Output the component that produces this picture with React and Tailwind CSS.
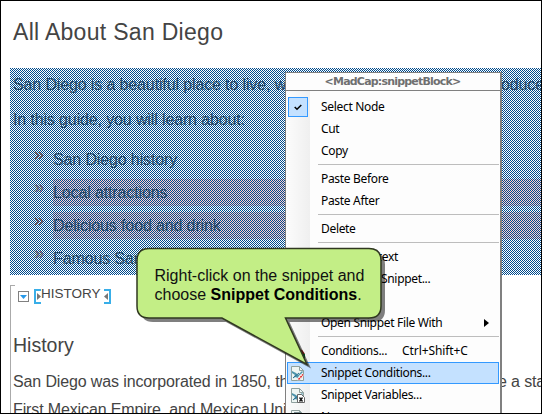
const doc = "font-['Liberation_Sans',Arial,sans-serif]";

function Line({ className, left, right, leftWidth = 'w-[488px]' }) {
  return (
    <div className={`flex whitespace-nowrap text-[16px] leading-[20px] tracking-[-0.13px] text-[#444] ${className}`}>
      <span className={`${leftWidth} shrink-0`}>{left}</span>
      <span>{right}</span>
    </div>
  );
}

function Bullet({ children, tinted }) {
  return (
    <li className="flex h-[33px] items-center pl-[21px] text-[16px] tracking-[-0.13px] text-[#444]">
      <span className="w-[19px] pb-[11px] text-[18px] leading-[14px] text-[#c65b2d]">»</span>
      <span className={`flex h-[27px] grow items-center pt-[1px] ${tinted ? 'bg-[#ffd0d0]' : ''}`}>{children}</span>
    </li>
  );
}

function Item({ children, icon, shortcut, active, checked, arrow }) {
  return (
    <div className={`mx-px flex h-[22px] shrink-0 items-center border ${active ? 'border-[#3399ff] bg-[#c4e1ff]' : 'border-transparent'}`}>
      <div className="flex w-[33px] shrink-0 items-center pl-[2px]">
        {checked ? (
          <span className="-ml-[2px] flex h-[20px] w-[20px] items-center justify-center border border-[#3399ff] bg-[#c4e1ff]">
            <svg width="8" height="7" viewBox="0 0 8 7"><path d="M.7 3 3 5.3 7.3 1" fill="none" stroke="#000" strokeWidth="1.5" /></svg>
          </span>
        ) : icon}
      </div>
      <span className="pb-px">{children}</span>
      {shortcut && <span className="ml-[15px] pb-px tracking-[-0.1px]">{shortcut}</span>}
      {arrow && <svg className="ml-auto mr-[9px]" width="5" height="8"><path d="M0 0 5 4 0 8Z" fill="#000" /></svg>}
    </div>
  );
}

const Separator = () => (
  <div className="h-[6px] shrink-0 pl-[32px] pr-px pt-[2px]"><div className="h-px bg-[#bdbdbd]" /></div>
);

function PageIcon({ kind }) {
  return (
    <svg width="16" height="17" viewBox="0 0 16 17">
      <path d="M1.5 1.5h8l4 4v10h-12z" fill="#eef5f3" stroke="#8fa09e" />
      <path d="M9.5 1.5v4h4" fill="none" stroke="#8fa09e" />
      {kind === 'text' ? <path d="M4 4h7M7.5 4v8" stroke="#7b8e91" strokeWidth="2" /> : (
        <>
          <path d="m2 6 4 2 2 2 4-4 1 1-4 4-1 2-3-1-2 1 2-3-3-2z" fill="#4d94ac" />
          <path d="M3 13 9 8" stroke="#286d90" />
        </>
      )}
      {kind === 'conditions' && (
        <g>
          <path d="m7 14 4-5 3 1-4 5H7z" fill="#fff" stroke="#c9d5dc" strokeWidth=".5" />
          <path d="m8.5 14.5 4.5-5" stroke="#e02929" strokeWidth="1.6" strokeDasharray="2 .7" />
        </g>
      )}
      {kind === 'variables' && (
        <g>
          <path d="M7.5 7.5h4l3 3v5h-7z" fill="#fff" stroke="#666" />
          <path d="m9.5 10.5 3 4m0-4-3 4" stroke="#111" strokeWidth="1.3" />
        </g>
      )}
    </svg>
  );
}

function Menu() {
  return (
    <div className="absolute left-[285px] top-[72px] flex h-[360px] w-[217px] flex-col border border-r-2 border-[#808080] bg-[#fdfdfd] font-['Noto_Sans','Open_Sans',sans-serif] text-[12px] leading-[20px] tracking-[-0.32px] whitespace-nowrap text-black">
      <div className="flex h-[18px] shrink-0 items-center justify-center border-b border-[#808080] pb-px pr-px pt-[2px] font-['DejaVu_Sans',sans-serif] text-[11px] font-bold tracking-[-0.8px] text-[#707070]">&lt;MadCap:snippetBlock&gt;</div>
      <div className="flex grow flex-col bg-[linear-gradient(90deg,#fcfcfc_0px,#efefef_24px,#fdfdfd_24px)] pt-[5px]">
        <Item checked>Select Node</Item>
        <Item>Cut</Item>
        <Item>Copy</Item>
        <Separator />
        <Item>Paste Before</Item>
        <Item>Paste After</Item>
        <Separator />
        <Item>Delete</Item>
        <Separator />
        <Item><span className="-ml-[2px]">Convert to text</span></Item>
        <Item><span className="ml-[60px]">Snippet...</span></Item>
        <Item />
        <Item arrow>Open Snippet File With</Item>
        <Separator />
        <Item shortcut="Ctrl+Shift+C" icon={<svg width="16" height="16"><path d="m9 6 6 5v5H9z" fill="#087431" /><path d="m11 7 3 4" stroke="#9b2424" strokeWidth="2" /></svg>}>Conditions...</Item>
        <Item active icon={<PageIcon kind="conditions" />}>Snippet Conditions...</Item>
        <Item icon={<PageIcon kind="variables" />}>Snippet Variables...</Item>
        <Item icon={<PageIcon kind="text" />}>Name...</Item>
      </div>
    </div>
  );
}

function Callout() {
  const shape = 'M149 248.5H369Q381 248.5 381 260.5V306Q381 318 369 318H285.5L307 364.5 222 318H149Q137 318 137 306V260.5Q137 248.5 149 248.5Z';
  return (
    <div className={`absolute inset-0 ${doc}`}>
      <svg className="absolute inset-0" width="542" height="414">
        <path d={shape} transform="translate(4 4)" fill="#000" fillOpacity=".5" />
        <path d={shape} fill="#c3ee86" stroke="#303820" strokeWidth="1.5" />
      </svg>
      <p className="absolute left-[154.5px] top-[266px] whitespace-nowrap text-[16px] leading-[19px] text-[#111]">
        Right-click on the snippet and<br />choose <b className="text-black">Snippet Conditions</b>.
      </p>
    </div>
  );
}

function SelectionDither() {
  return (
    <svg className="absolute inset-0 h-full w-full" shapeRendering="crispEdges">
      <defs>
        <pattern id="dither" width="2" height="2" patternUnits="userSpaceOnUse">
          <rect width="1" height="1" fill="#004b8d" />
          <rect x="1" y="1" width="1" height="1" fill="#004b8d" />
        </pattern>
      </defs>
      <rect width="100%" height="100%" fill="url(#dither)" />
    </svg>
  );
}

export default function App() {
  return (
    <div className={`relative h-[414px] w-[542px] overflow-hidden bg-white ${doc}`}>
      <h1 className="pl-[13px] pt-[19px] text-[23px] leading-[26px] tracking-[0.3px] text-[#444]">All About San Diego</h1>
      <section className="relative ml-[10px] mt-[23px] h-[207px] overflow-hidden">
        <Line className="pl-[3px] pt-[7px]" left="San Diego is a beautiful place to live, w" right="oduce" />
        <Line className="pl-[3px] pt-[15px]" left="In this guide, you will learn about:" />
        <ul className="pt-[13px] pl-[3px]">
          <Bullet>San Diego history</Bullet>
          <Bullet tinted>Local attractions</Bullet>
          <Bullet tinted>Delicious food and drink</Bullet>
          <Bullet>Famous San Diegans</Bullet>
        </ul>
        <SelectionDither />
      </section>
      <section className="ml-[10px] mt-[10px] h-[140px] border-l border-[#aaa]">
        <div className="h-px w-[4px] bg-[#aaa]" />
        <div className="flex items-start pl-[7px] pt-[3px]">
          <span className="mt-[2px] flex h-[11px] w-[11px] items-center justify-center border border-[#808080]">
            <svg width="7" height="5"><path d="M0 1h7L3.5 5Z" fill="#2698e8" /></svg>
          </span>
          <svg className="ml-[5px]" width="7" height="15"><path d="M7 1H1v13h6" fill="none" stroke="#38aee8" strokeWidth="2" /><path d="m3 4 4 3.5L3 11Z" fill="#777" /></svg>
          <span className="w-[63px] text-[13.5px] leading-[10px] text-[#444]">HISTORY</span>
          <svg width="7" height="15"><path d="M0 1h6v13H0" fill="none" stroke="#38aee8" strokeWidth="2" /><path d="M4 4 0 7.5 4 11Z" fill="#777" /></svg>
        </div>
        <h2 className="pl-[2px] pt-[29px] text-[19.5px] leading-[24px] text-[#444]">History</h2>
        <Line className="pl-[2px] pt-[15px]" leftWidth="w-[485px]" left="San Diego was incorporated in 1850, the" right="e a stat" />
        <Line className="pl-[2px] pt-[8px]" left="First Mexican Empire, and Mexican United" />
      </section>
      <Menu />
      <Callout />
      <div className="pointer-events-none absolute inset-0 border border-black" />
    </div>
  );
}
